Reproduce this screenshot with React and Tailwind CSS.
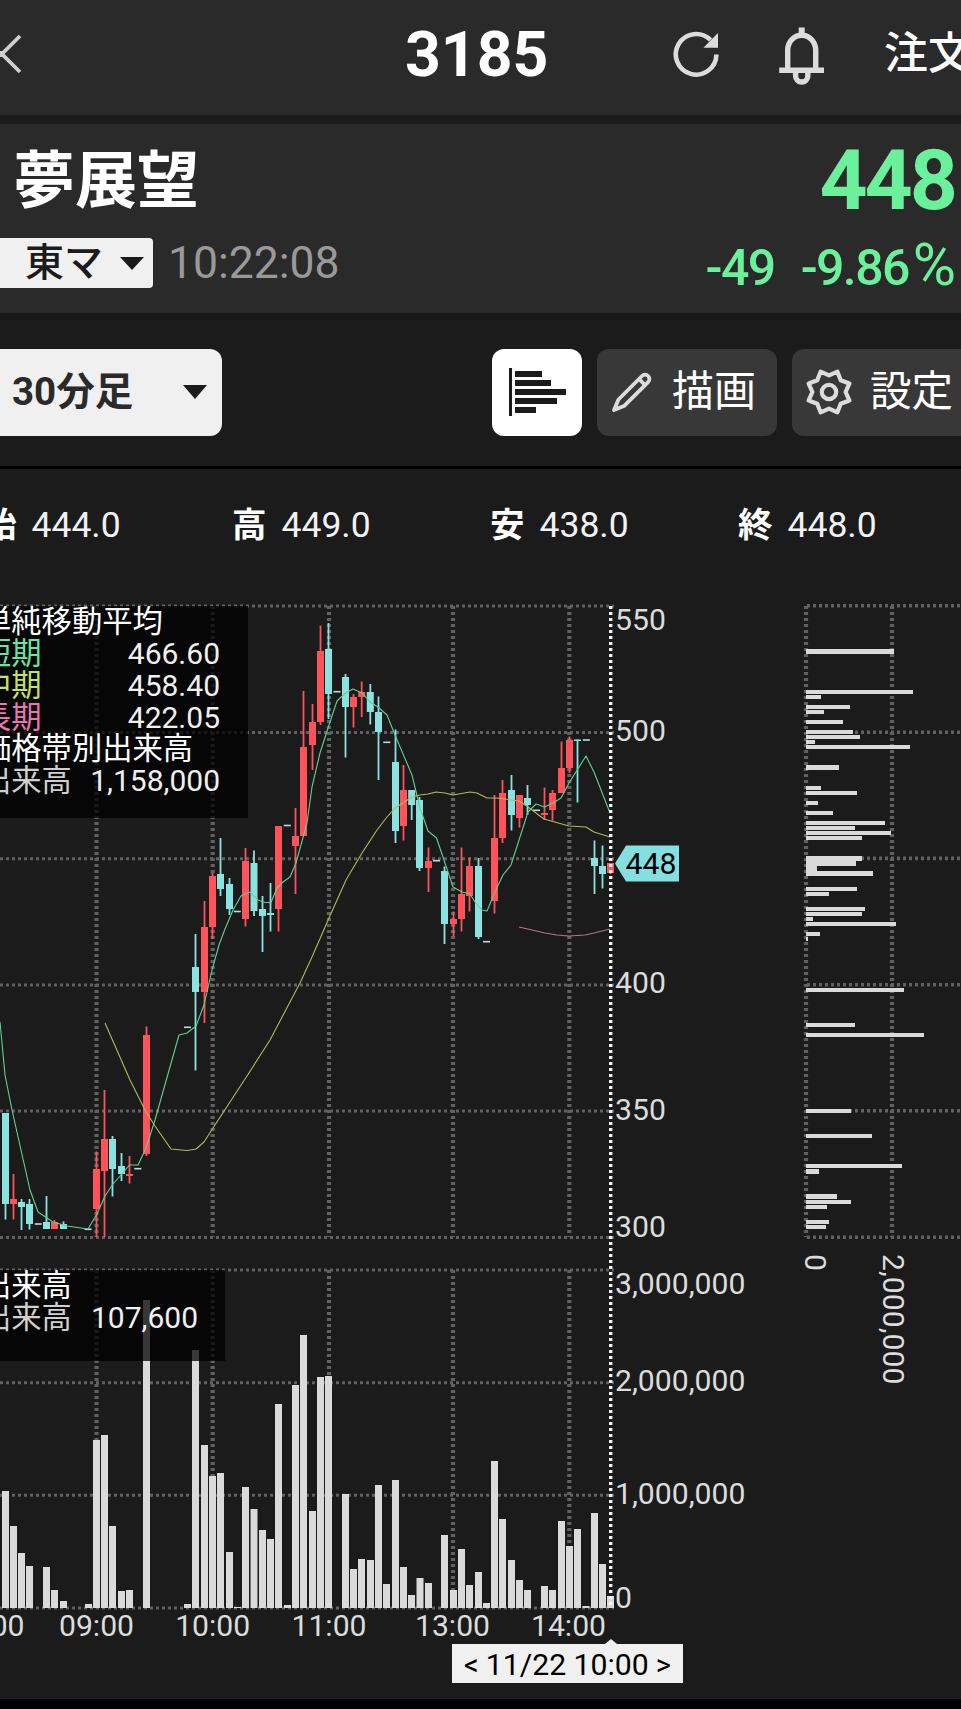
import React from "react";

const UP = "#ff535b";
const DOWN = "#8ae3e0";

const PRICE_LINES = [606, 732.5, 858.7, 985, 1111, 1237.5];
const VOLUME_LINES = [1270, 1382.7, 1495.3, 1608];
const TIME_LINES = [96.5, 212.7, 329, 453, 569.3];

// [x, high, body top, body bottom, low, rising]
const CANDLES = [
  [5.5, 1113, 1113, 1204, 1219.5, 0],
  [13.5, 1174, 1199, 1204, 1219.5, 1],
  [21.5, 1199, 1202, 1207, 1230, 0],
  [29.5, 1199, 1204, 1224, 1229.5, 0],
  [46.5, 1196, 1222, 1229, 1229, 0],
  [54.5, 1220, 1222, 1229, 1229, 1],
  [63.5, 1221.5, 1224, 1229, 1229, 0],
  [96.5, 1151.5, 1169, 1209, 1237, 1],
  [104.5, 1090, 1139, 1171, 1237, 1],
  [112.5, 1136, 1139, 1169, 1196.5, 0],
  [121.5, 1153, 1166, 1174, 1181, 0],
  [129.5, 1156, 1174, 1176, 1183.5, 1],
  [146.5, 1026.5, 1035, 1154, 1156, 1],
  [195.5, 934, 967, 992, 1070.5, 0],
  [204.5, 901, 927, 992, 1023, 1],
  [212.5, 873, 876, 927, 939, 1],
  [220.5, 838, 874, 889, 896, 0],
  [229.5, 878, 884, 909, 915, 0],
  [245.5, 848, 861, 919, 926.5, 1],
  [254, 850.5, 863, 911, 916, 0],
  [262.5, 896, 909, 916, 952, 0],
  [270.5, 883, 913, 915, 931.5, 0],
  [278.5, 826, 826, 909, 931.5, 1],
  [295.5, 808, 836, 846, 894, 1],
  [303.5, 691, 747, 836, 836, 1],
  [312.5, 704, 722, 745, 770, 1],
  [320.5, 625.5, 651, 722, 725, 1],
  [328.5, 623, 649, 694, 719, 0],
  [345.5, 674, 677, 707, 757.5, 0],
  [353.5, 694, 697, 707, 727.5, 1],
  [361.7, 681.5, 692, 697, 717, 1],
  [370.3, 684, 692, 712, 724.5, 0],
  [378.5, 696.5, 712, 732, 780, 0],
  [395.5, 729.5, 762, 831, 843, 0],
  [403.5, 765, 790, 826, 840.5, 1],
  [411.7, 790, 790, 805, 820, 0],
  [419.5, 797, 800, 868, 871, 0],
  [428.5, 847.5, 861, 868, 892, 1],
  [444.5, 866.5, 871, 924, 944, 0],
  [453.5, 911.5, 919, 924, 936.5, 1],
  [461.5, 847.5, 894, 919, 931.5, 1],
  [469.5, 857.5, 866, 896, 911.5, 1],
  [478.5, 858, 866, 937, 939, 0],
  [494.5, 795, 838, 901, 913.5, 1],
  [502.5, 780, 793, 838, 843, 1],
  [511.5, 775, 790, 815, 830.5, 0],
  [519.5, 795, 795, 818, 827.5, 1],
  [527.5, 785, 798, 805, 815, 0],
  [544.5, 787.5, 813, 815, 820, 1],
  [552.5, 790, 793, 810, 820.5, 1],
  [561.5, 741.5, 768, 793, 793, 1],
  [569.5, 736.5, 740, 768, 773, 1],
  [577.5, 739.5, 739.5, 741, 802.5, 0],
  [594.5, 840.5, 858, 866, 894, 0],
  [602.5, 845.5, 866, 874, 888.5, 0],
  [610.5, 863, 863, 873, 874, 1],
];

const DASHES = [
  [38.3, 1224], [88, 1229.3], [137.8, 1168.7], [187.5, 1027.3], [237.3, 911.5],
  [287.3, 825.5], [337, 691.7], [386.8, 742.3], [436.5, 860.7], [486.5, 941.7],
  [536.5, 810.3], [586.3, 740],
];

const SHORT_MA =
  "0,1022 5,1075 12,1110 30,1190 38,1212 53,1222 67,1226 88,1229 97,1214 105,1196 113,1184 121,1175 129.5,1165 138,1165 146,1148 155,1120 179,1035 187,1033 196,1026 204,1005 212,970 219,945 225,929 233,910 241,896 250,892 258,900 265,902.5 271,902.5 277,888 283,882 290,877 296,863 307,823 312,787 320,753 329,725 337,701 345.5,693 353,689 362,693 370,702 378,707 387,715 395,735 412,775 420,808 428,831 436.5,838 445,863 453,887 462,892 470,894 475,902 482,910 487,911 495,892 503,875 511,865 520,837 528,812 536,804 544.5,807 553,803 561,798 569,783 586,756 594,772 610,813";
const MID_MA =
  "105,1023 130,1080 146,1112 155,1126 171,1149 187,1150.5 196,1149 204,1142 213,1128 247,1076 270,1040 300,983 312,957 329,918 346,880 362,853 377,830 387,817 395,808 412,797 420,795 428,794 436,792 445,793 453,795 470,792 477,793 487,798 497,798 519,801 528,807 544,819 569,826 586,827 594,832 610,837";
const LONG_MA = "519,927 545,933 557,935 569,936 585,935 594,933 610,929";

const VOLUMES = [
  [5.5, 1491], [13.5, 1526], [21.5, 1553], [29.5, 1566], [46.5, 1567], [54.5, 1590],
  [63.5, 1601], [88.5, 1604], [96.5, 1440], [104.5, 1435], [112.5, 1526], [121.5, 1591],
  [129.5, 1590], [146.5, 1300], [187.5, 1604], [195.5, 1350], [204.5, 1445], [212.5, 1476],
  [220.5, 1473], [229.5, 1552], [237.5, 1607], [245.5, 1487], [254, 1509], [262.5, 1530],
  [270.5, 1539], [278.5, 1404], [287.5, 1605], [295.5, 1385], [303.5, 1335], [312.5, 1511],
  [320.5, 1377], [328.5, 1376], [345.5, 1494], [353.5, 1569], [361.5, 1559], [370.5, 1560],
  [378.5, 1485], [386.5, 1584], [395.5, 1480], [403.5, 1567], [411.5, 1595], [420, 1578],
  [428.5, 1583], [444.5, 1535], [453.5, 1590], [461.5, 1549], [469.5, 1585], [478.5, 1572],
  [486.5, 1603], [494.5, 1461], [502.5, 1519], [511.5, 1560], [519.5, 1580], [527.5, 1590],
  [544.5, 1586], [552.5, 1590], [561.5, 1521], [569.5, 1546], [577.5, 1529], [586, 1606],
  [594.5, 1513], [602.5, 1564], [610.5, 1596],
];

// [top, right edge, height]
const PROFILE = [
  [649, 894, 5], [690, 913, 4], [695, 821, 4], [705, 850, 4], [710, 824, 4], [720, 843, 4],
  [730, 853, 4], [735, 860, 4], [740, 815, 4], [745, 910, 4], [765, 839, 5], [786, 821, 4],
  [791, 857, 4], [801, 818, 4], [811, 833, 4], [821, 885, 4], [826, 855, 4], [831, 891, 4],
  [836, 862, 4], [856, 862, 5], [861, 856, 5], [866, 817, 5], [871, 873, 5], [887, 857, 4],
  [892, 829, 4], [907, 865, 4], [912, 862, 4], [917, 813, 4], [922, 896, 4], [932, 820, 4],
  [937, 808, 4], [988, 904, 4], [1023, 855, 4], [1033, 924, 4], [1109, 851, 4],
  [1134, 872, 4], [1164, 902, 4], [1169, 819, 5], [1194, 837, 5], [1200, 851, 4],
  [1205, 827, 4], [1220, 829, 4], [1225, 826, 4],
];

const PRICE_LABELS = [["550", 630], ["500", 741], ["400", 993], ["350", 1119.5], ["300", 1237]];
const VOLUME_LABELS = [["3,000,000", 1294], ["2,000,000", 1391], ["1,000,000", 1504], ["0", 1608]];
const TIME_LABELS = [["08:00", -13], ["09:00", 96.5], ["10:00", 212.7], ["11:00", 329], ["13:00", 452.5], ["14:00", 568.5]];

function Grid({ x1, x2, y1, y2, width = 4.2 }) {
  return <line x1={x1} x2={x2} y1={y1} y2={y2} stroke="#616161" strokeWidth={width} strokeDasharray="3 3" />;
}

function Chart() {
  return (
    <svg className="block h-[1118px] w-[961px] font-['Roboto',sans-serif] text-[30.15px]" viewBox="0 580 961 1118">
      <g>
        {PRICE_LINES.map((y) => <Grid key={y} x1={0} x2={614} y1={y} y2={y} width={3} />)}
        {VOLUME_LINES.map((y) => <Grid key={y} x1={0} x2={614} y1={y} y2={y} width={3} />)}
        {TIME_LINES.map((x) => (
          <g key={x}>
            <Grid x1={x} x2={x} y1={606} y2={1237} />
            <Grid x1={x} x2={x} y1={1270} y2={1608} />
          </g>
        ))}
        {PRICE_LINES.map((y) => <Grid key={y} x1={807} x2={961} y1={y - 0.3} y2={y - 0.3} width={3.6} />)}
        <Grid x1={806} x2={806} y1={606} y2={1237} />
        <Grid x1={892} x2={892} y1={606} y2={1237} />
      </g>
      <g>
        {CANDLES.map(([x, high, top, bottom, low, up]) => (
          <g key={x} fill={up ? UP : DOWN}>
            <rect x={x - 0.9} y={high} width={1.8} height={low - high} />
            <rect x={x - 3.5} y={top} width={7} height={bottom - top} />
          </g>
        ))}
        {DASHES.map(([x, y]) => <rect key={x} x={x - 3.5} y={y - 0.8} width={7} height={1.6} fill="#b6dde6" />)}
      </g>
      <g fill="none" strokeWidth="1.1" strokeLinejoin="round">
        <polyline points={SHORT_MA} stroke="#63cf92" />
        <polyline points={MID_MA} stroke="#b3b956" />
        <polyline points={LONG_MA} stroke="#b5748c" />
      </g>
      <g fill="#dadada">
        {VOLUMES.map(([x, y]) => <rect key={x} x={x - 3.5} y={y} width={7} height={1608 - y} />)}
        {PROFILE.map(([y, right, h]) => <rect key={y} x={806} y={y} width={right - 806} height={h} />)}
      </g>
      <line x1={610.7} x2={610.7} y1={606} y2={1608} stroke="#f4f4f4" strokeWidth={3.4} strokeDasharray="3 3" />
      <g fill="#dcdcdc">
        {PRICE_LABELS.map(([t, y]) => <text key={t} x={615} y={y}>{t}</text>)}
        {VOLUME_LABELS.map(([t, y]) => <text key={t} x={615} y={y}>{t}</text>)}
        {TIME_LABELS.map(([t, x]) => <text key={t} x={x} y={1636} textAnchor="middle">{t}</text>)}
        <text transform="translate(805 1254) rotate(90)">0</text>
        <text transform="translate(883 1254) rotate(90)">2,000,000</text>
      </g>
      <path d="M615 863.5 L626 845.5 H679 V881.5 H626 Z" fill="#84e0e0" />
      <text x={625.5} y={874} fill="#000">448</text>
    </svg>
  );
}

function LegendRow({ label, value, tone }) {
  return (
    <div className="flex h-[31.8px] items-center justify-between whitespace-nowrap leading-none">
      <span className={tone}>{label}</span>
      <span className="text-[30px] text-[#f0f0f0]">{value}</span>
    </div>
  );
}

function Ohlc({ label, value, className }) {
  return (
    <div className={`flex shrink-0 items-center gap-[15px] leading-none text-white ${className}`}>
      <span className="text-[34.5px] font-bold">{label}</span>
      <span className="text-[35.5px] text-[#f2f2f2]">{value}</span>
    </div>
  );
}

function gearPoints() {
  const pts = [];
  for (let i = 0; i < 16; i++) {
    const a = (i * 22.5 * Math.PI) / 180;
    const r = i % 2 === 0 ? 16.6 : 22;
    pts.push(`${(23 + r * Math.sin(a)).toFixed(2)},${(23 - r * Math.cos(a)).toFixed(2)}`);
  }
  return pts.join(" ");
}

export default function App() {
  return (
    <div className="flex h-[1709px] w-[961px] flex-col overflow-hidden bg-[#1b1b1b] font-['Roboto','Noto_Sans_CJK_JP',sans-serif]">
      <header className="flex h-[115px] shrink-0 items-start overflow-hidden bg-[#2a2a2a] text-white">
        <svg className="mt-[30px] h-[48px] w-[26px] shrink-0" viewBox="0 0 26 48" fill="none" stroke="#cfcfcf" strokeWidth="3.8">
          <path d="M20 6 L2 24 L20 42" />
          <path d="M-2 24 H3" strokeWidth="6" />
        </svg>
        <h1 className="ml-[379px] mt-[24px] w-[143px] shrink-0 text-[62.5px] font-bold leading-none">3185</h1>
        <svg className="ml-[122px] mt-[28px] h-[52px] w-[52px] shrink-0" viewBox="0 0 52 52" fill="none" stroke="#dcdcdc" strokeWidth="4.6">
          <path d="M46.4 26.5 A20.3 20.3 0 1 1 40.5 12" />
          <path d="M48 5 V19.7 H33.5 L40 13 Z" fill="#dcdcdc" stroke="none" />
        </svg>
        <svg className="ml-[54px] mt-[26px] h-[60px] w-[50px] shrink-0" viewBox="0 0 50 60" fill="none" stroke="#dcdcdc" strokeWidth="5.4">
          <path d="M25.7 1.5 V9" strokeWidth="6" />
          <path d="M11.7 43 V24 a14 14.8 0 0 1 28 0 V43" />
          <path d="M3.2 44.2 H48" strokeWidth="5.6" />
          <path d="M19.6 46 V50 a6.1 6 0 0 0 12.2 0 V46" />
        </svg>
        <span className="ml-[58px] mt-[32px] shrink-0 whitespace-nowrap text-[44px] font-medium leading-none">注文</span>
      </header>

      <section className="mt-[9px] flex h-[189px] shrink-0 justify-between overflow-hidden bg-[#2a2a2a]">
        <div className="flex flex-col items-start">
          <h2 className="ml-[13px] mt-[27px] h-[62px] whitespace-nowrap text-[62px] font-bold leading-none text-white">夢展望</h2>
          <div className="mt-[25px] flex h-[50px] items-center">
            <button className="flex h-[50px] w-[153px] items-center rounded-r bg-[#f0f0f0] pl-[25px] text-[39px] font-medium leading-none text-[#1b1b1b]">
              <span className="h-[39px]">東マ</span>
              <svg className="ml-[17px] h-[13px] w-[24px]" viewBox="0 0 24 13"><path d="M0 0 H24 L12 13 Z" fill="#1b1b1b" /></svg>
            </button>
            <span className="ml-[15px] text-[44.5px] leading-none text-[#999]">10:22:08</span>
          </div>
        </div>
        <div className="flex flex-col items-end pr-[6px] text-[#6bf19b]">
          <span className="mt-[15px] h-[84px] text-[84px] font-bold leading-none tracking-[-3px]">448</span>
          <div className="mt-[17px] flex h-[58px] items-baseline gap-[26px] text-[50px] font-medium leading-none tracking-[-1.6px]">
            <span>-49</span>
            <span>-9.86<span className="ml-[4px] text-[59px] font-normal leading-[50px] tracking-[-1px]">%</span></span>
          </div>
        </div>
      </section>

      <div className="h-[7px] shrink-0 bg-[#181818]" />

      <nav className="flex h-[146px] shrink-0 items-center overflow-hidden pb-[2px]">
        <button className="flex h-[87px] w-[222px] shrink-0 items-center rounded-r-xl bg-[#f0f0f0] pl-[12px] text-[38.5px] font-bold leading-none text-[#2a2a2a]">
          <span className="whitespace-nowrap">30分足</span>
          <svg className="ml-auto mr-[15px] h-[14px] w-[24px]" viewBox="0 0 24 14"><path d="M0 0 H24 L12 14 Z" fill="#1b1b1b" /></svg>
        </button>
        <button className="ml-[270px] flex h-[87px] w-[90px] shrink-0 items-center rounded-xl bg-white pl-[17px]">
          <svg className="h-[48px] w-[58px]" viewBox="0 0 58 48" fill="#1b1b1b">
            <path d="M0 0 h3 v48 h-3 Z M6 3 h27 v6 h-27 Z M6 12 h36 v6 h-36 Z M6 21 h51 v6 h-51 Z M6 30 h42 v6 h-42 Z M6 39 h21 v6 h-21 Z" />
          </svg>
        </button>
        <button className="ml-[15px] flex h-[87px] w-[180px] shrink-0 items-center rounded-xl bg-[#383838] pl-[14px] text-[42px] leading-none text-white">
          <svg className="h-[42px] w-[42px] shrink-0" viewBox="0 0 42 42" fill="none" stroke="#dcdcdc" strokeWidth="3.8">
            <path d="M3 39 L7.5 28.5 L31 5 A4.3 4.3 0 0 1 37.1 11.1 L13.5 34.7 Z" strokeLinejoin="round" />
            <path d="M28 8 L34.1 14.1" />
          </svg>
          <span className="ml-[19px] whitespace-nowrap">描画</span>
        </button>
        <button className="ml-[15px] flex h-[87px] w-[190px] shrink-0 items-center rounded-xl bg-[#383838] pl-[14px] text-[41.5px] leading-none text-white">
          <svg className="h-[46px] w-[46px] shrink-0" viewBox="0 0 46 46" fill="none" stroke="#dcdcdc" strokeWidth="4.2" strokeLinejoin="round">
            <polygon points={gearPoints()} />
            <circle cx="23" cy="23" r="7.2" />
          </svg>
          <span className="ml-[18px] whitespace-nowrap">設定</span>
        </button>
      </nav>

      <div className="h-[3px] shrink-0 bg-black" />

      <section className="flex h-[111px] shrink-0 items-center overflow-hidden pt-[2px]">
        <Ohlc label="始" value="444.0" className="-ml-[18px] w-[250px]" />
        <Ohlc label="高" value="449.0" className="w-[258px]" />
        <Ohlc label="安" value="438.0" className="w-[248px]" />
        <Ohlc label="終" value="448.0" className="w-[200px]" />
      </section>

      <main className="relative h-[1118px] shrink-0">
        <Chart />
        <div className="absolute left-0 top-[26px] h-[212px] w-[248px] overflow-hidden bg-black/75 text-[30.3px]">
          <div className="-ml-[19px] w-[239px] pt-[0.5px] text-white">
            <LegendRow label="単純移動平均" />
            <LegendRow label="短期" value="466.60" tone="text-[#6be6a0]" />
            <LegendRow label="中期" value="458.40" tone="text-[#c3e067]" />
            <LegendRow label="長期" value="422.05" tone="text-[#e879b0]" />
            <LegendRow label="価格帯別出来高" />
            <LegendRow label="出来高" value="1,158,000" tone="text-[#cfcfcf]" />
          </div>
        </div>
        <div className="absolute left-0 top-[690px] h-[91px] w-[225px] overflow-hidden bg-black/75 text-[30.3px]">
          <div className="-ml-[19px] w-[217px] text-white">
            <LegendRow label="出来高" />
            <LegendRow label="出来高" value="107,600" tone="text-[#cfcfcf]" />
          </div>
        </div>
        <div className="absolute left-[452px] top-[1064px] flex h-[39px] w-[231px] items-center justify-center gap-[7px] bg-[#f0f0f0] pt-[3px] text-[30.2px] leading-none text-black">
          <span className="absolute -top-[5px] left-[153px] h-[5px] w-[12px] bg-[#f0f0f0] [clip-path:polygon(50%_0,100%_100%,0_100%)]" />
          <span className="text-[29px]">&lt;</span>
          <span>11/22 10:00</span>
          <span className="text-[29px]">&gt;</span>
        </div>
      </main>

      <footer className="h-[11px] shrink-0 border-t border-[#1c1c2c] bg-[#000005]" />
    </div>
  );
}
